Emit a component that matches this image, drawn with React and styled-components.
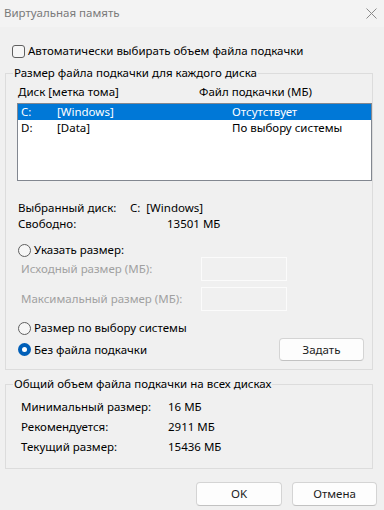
import React from "react";
import styled, { createGlobalStyle } from "styled-components";

const Global = createGlobalStyle`
  html, body { margin: 0; padding: 0; background: #f0f0f0; }
  body { font-family: "Noto Sans", "Open Sans", Arial, sans-serif; font-size: 11.5px; color: #000; }
  * { box-sizing: border-box; }
`;

const Window = styled.div`
  width: 384px;
  height: 510px;
  background: #f0f0f0;
  display: flex;
  flex-direction: column;
  overflow: hidden;
`;

const TitleBar = styled.div`
  height: 27px;
  flex: none;
  background: #f3f3f3;
  display: flex;
  align-items: center;
  justify-content: space-between;
  padding: 0 7px 1px 4px;
`;

const Title = styled.span`
  color: #7a7a7a;
  line-height: 16px;
`;

const Content = styled.div`
  padding: 0 7px 0 5px;
  display: flex;
  flex-direction: column;
`;

const CheckRow = styled.label`
  display: flex;
  align-items: center;
  gap: 3px;
  height: 16px;
  margin: 16px 0 0 7px;
  line-height: 16px;
`;

const CheckBox = styled.span`
  width: 13px;
  height: 13px;
  border: 1px solid #5f5f5f;
  border-radius: 3px;
  background: #f6f6f6;
  flex: none;
`;

const Group = styled.fieldset`
  margin: ${(p) => p.$top}px 4px 0 0;
  padding: 0;
  border: 1px solid #dcdcdc;
  min-inline-size: 0;
`;

const Legend = styled.legend`
  margin-left: 7px;
  padding: 0 1px;
  line-height: 16px;
`;

const GroupInner = styled.div`
  padding: ${(p) => p.$pad};
  display: flex;
  flex-direction: column;
`;

const HeaderRow = styled.div`
  display: grid;
  grid-template-columns: 181px 1fr;
  padding-left: 1px;
  line-height: 16px;
  margin-top: 3px;
`;

const List = styled.div`
  margin-top: 3px;
  height: 78px;
  border: 1px solid #828790;
  background: #fff;
`;

const ListRow = styled.div`
  display: grid;
  grid-template-columns: 36px 175px 1fr;
  padding-left: 3px;
  height: 16px;
  line-height: 16px;
  background: ${(p) => (p.$selected ? "#0078d7" : "transparent")};
  color: ${(p) => (p.$selected ? "#fff" : "#000")};
`;

const InfoRow = styled.div`
  display: grid;
  grid-template-columns: ${(p) => p.$label}px 1fr;
  padding-left: 1px;
  line-height: 16px;
  margin-top: ${(p) => p.$top || 0}px;
`;

const RadioRow = styled.label`
  display: flex;
  align-items: center;
  gap: 3px;
  padding-left: 1px;
  height: ${(p) => p.$h || 16}px;
  margin-top: ${(p) => p.$top || 0}px;
  line-height: 16px;
`;

const Radio = styled.span`
  width: 13px;
  height: 13px;
  border-radius: 50%;
  flex: none;
  display: flex;
  align-items: center;
  justify-content: center;
  border: ${(p) => (p.$checked ? "none" : "1px solid #5f5f5f")};
  background: ${(p) => (p.$checked ? "#005fb8" : "#f6f6f6")};
  &::after {
    content: "";
    display: ${(p) => (p.$checked ? "block" : "none")};
    width: 5px;
    height: 5px;
    border-radius: 50%;
    background: #fff;
  }
`;

const InputRow = styled.div`
  display: grid;
  grid-template-columns: 180px 86px;
  align-items: center;
  padding-left: 4px;
  margin-top: ${(p) => p.$top || 0}px;
  color: #a0a0a0;
  line-height: 16px;
`;

const DisabledInput = styled.div`
  height: 24px;
  border: 1px solid #fbfbfb;
  background: #f0f0f0;
`;

const ActionRow = styled.div`
  display: flex;
  align-items: center;
  justify-content: space-between;
  margin-top: ${(p) => p.$top || 0}px;
  padding-right: 8px;
`;

const Button = styled.button`
  font: inherit;
  color: #1b1b1b;
  width: ${(p) => p.$w}px;
  height: ${(p) => p.$h}px;
  background: #fdfdfd;
  border: 1px solid #d4d4d4;
  border-bottom-color: #c2c2c2;
  border-radius: 4px;
  padding: 0;
  line-height: 16px;
`;

const SummaryRow = styled.div`
  display: grid;
  grid-template-columns: 147px 1fr;
  padding-left: 4px;
  height: 20px;
  line-height: 20px;
`;

const Footer = styled.div`
  display: flex;
  justify-content: flex-end;
  gap: 10px;
  margin-top: 13px;
`;

const CloseIcon = () => (
  <svg width="11" height="11" viewBox="0 0 11 11">
    <path d="M0.5 0.5 L10.5 10.5 M10.5 0.5 L0.5 10.5" stroke="#8a8a8a" strokeWidth="1" fill="none" />
  </svg>
);

export default function App() {
  return (
    <Window>
      <Global />
      <TitleBar>
        <Title>Виртуальная память</Title>
        <CloseIcon />
      </TitleBar>
      <Content>
        <CheckRow>
          <CheckBox />
          <span>Автоматически выбирать объем файла подкачки</span>
        </CheckRow>
        <Group $top={6}>
          <Legend>Размер файла подкачки для каждого диска</Legend>
          <GroupInner $pad="0 0 8px 11px">
            <HeaderRow>
              <span>Диск [метка тома]</span>
              <span>Файл подкачки (МБ)</span>
            </HeaderRow>
            <List>
              <ListRow $selected>
                <span>C:</span>
                <span>[Windows]</span>
                <span>Отсутствует</span>
              </ListRow>
              <ListRow>
                <span>D:</span>
                <span>[Data]</span>
                <span>По выбору системы</span>
              </ListRow>
            </List>
            <InfoRow $label={112} $top={19}>
              <span>Выбранный диск:</span>
              <span>C:&nbsp; [Windows]</span>
            </InfoRow>
            <InfoRow $label={149}>
              <span>Свободно:</span>
              <span>13501 МБ</span>
            </InfoRow>
            <RadioRow $top={11} $h={14}>
              <Radio />
              <span>Указать размер:</span>
            </RadioRow>
            <InputRow>
              <span>Исходный размер (МБ):</span>
              <DisabledInput />
            </InputRow>
            <InputRow $top={6}>
              <span>Максимальный размер (МБ):</span>
              <DisabledInput />
            </InputRow>
            <RadioRow $top={9}>
              <Radio />
              <span>Размер по выбору системы</span>
            </RadioRow>
            <ActionRow $top={2}>
              <RadioRow>
                <Radio $checked />
                <span>Без файла подкачки</span>
              </RadioRow>
              <Button $w={85} $h={23}>Задать</Button>
            </ActionRow>
          </GroupInner>
        </Group>
        <Group $top={6}>
          <Legend>Общий объем файла подкачки на всех дисках</Legend>
          <GroupInner $pad="5px 0 11px 11px">
            <SummaryRow>
              <span>Минимальный размер:</span>
              <span>16 МБ</span>
            </SummaryRow>
            <SummaryRow>
              <span>Рекомендуется:</span>
              <span>2911 МБ</span>
            </SummaryRow>
            <SummaryRow>
              <span>Текущий размер:</span>
              <span>15436 МБ</span>
            </SummaryRow>
          </GroupInner>
        </Group>
        <Footer>
          <Button $w={86} $h={24}>OK</Button>
          <Button $w={85} $h={24}>Отмена</Button>
        </Footer>
      </Content>
    </Window>
  );
}
